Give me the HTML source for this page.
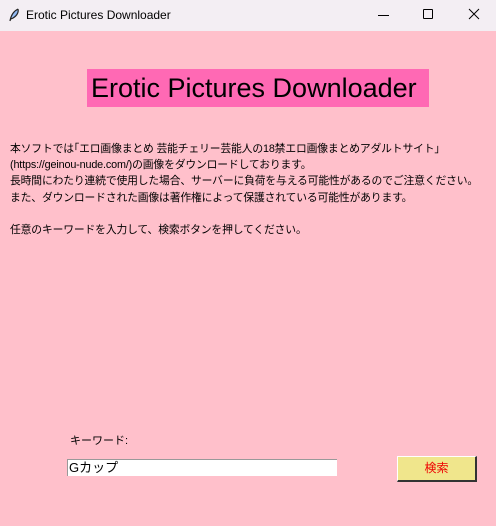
<!DOCTYPE html>
<html><head><meta charset="utf-8"><style>
*{margin:0;padding:0;box-sizing:border-box}
body{width:496px;height:526px;overflow:hidden;background:#ffc0cb;font-family:"Liberation Sans","Noto Sans CJK JP",sans-serif;position:relative}
.tb{position:absolute;left:0;top:0;width:496px;height:31px;background:#f3eef3;font-size:12px;color:#000}
.tb .t{position:absolute;left:26px;top:8px}
.ab{position:absolute}
.title{position:absolute;left:87px;top:69px;width:342px;height:38px;background:#ff69b4;font-size:27px;line-height:38px;padding-left:4px;color:#000;white-space:nowrap}
.txt{position:absolute;left:10px;top:141px;font-size:10.8px;line-height:16.2px;color:#000;white-space:nowrap;letter-spacing:-0.15px}
</style></head><body>
<div class="tb">
<svg class="ab" style="left:8px;top:8px" width="12" height="15" viewBox="0 0 12 15"><path d="M10 1 C6 3 3 7 2 13 M10 1 C11 5 8 9 3 11" stroke="#222" fill="#8ab4f0" stroke-width="1.2"/></svg>
<span class="t">Erotic Pictures Downloader</span>
<div class="ab" style="left:378px;top:15px;width:11px;height:1px;background:#000"></div>
<div class="ab" style="left:423px;top:9px;width:10px;height:10px;border:1px solid #000;border-radius:1px"></div>
<svg class="ab" style="left:468px;top:8px" width="12" height="12" viewBox="0 0 12 12"><path d="M1 1L11 11M11 1L1 11" stroke="#000" stroke-width="1"/></svg>
</div>
<div class="title">Erotic Pictures Downloader</div>
<div class="txt">本ソフトでは｢エロ画像まとめ 芸能チェリー芸能人の18禁エロ画像まとめアダルトサイト｣<br>(https://geinou-nude.com/)の画像をダウンロードしております。<br>長時間にわたり連続で使用した場合、サーバーに負荷を与える可能性があるのでご注意ください。<br>また、ダウンロードされた画像は著作権によって保護されている可能性があります。<br><br>任意のキーワードを入力して、検索ボタンを押してください。</div>
<div class="ab" style="left:70px;top:432px;font-size:11px">キーワード:</div>
<div class="ab" style="left:67px;top:459px;width:270px;height:17px;background:#fff;border-top:1px solid #999;border-left:1px solid #999;font-size:13px;line-height:15px;padding-left:1px">Gカップ</div>
<div class="ab" style="left:397px;top:456px;width:80px;height:26px;background:#f0e68c;border:1px solid #fff;border-right:2px solid #333;border-bottom:2px solid #333;color:#e00;font-size:12px;text-align:center;line-height:23px">検索</div>
</body></html>
